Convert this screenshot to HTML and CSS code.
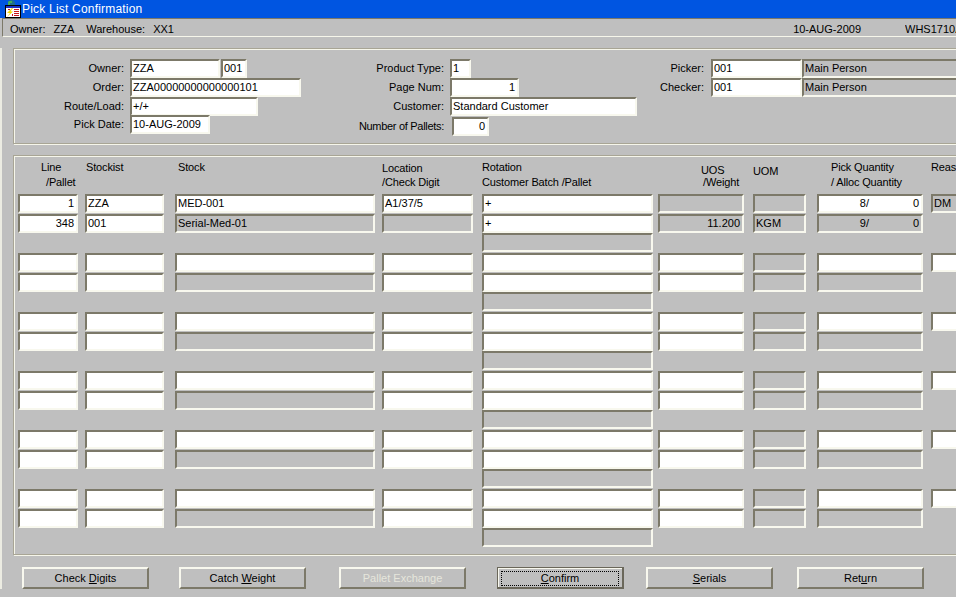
FILE: index.html
```html
<!DOCTYPE html>
<html lang="en">
<head>
    <meta charset="UTF-8">
    <meta name="viewport" content="width=device-width, initial-scale=1.0">
    <title>Pick List Confirmation</title>
    <link rel="stylesheet" href="styles.css">
</head>
<body>
    <header class="title-bar">
        <svg class="app-icon" width="16" height="18" viewBox="0 0 16 18">
            <circle cx="6.5" cy="3.5" r="3.5" fill="#1f6f8f"/>
            <path d="M4 1h3v2H5v2H3V2z" fill="#3fae5a"/>
            <rect x="0" y="5" width="16" height="13" fill="#000"/>
            <rect x="1" y="6" width="14" height="11" fill="#fff"/>
            <rect x="1" y="6" width="14" height="2" fill="#1c2fc4"/>
            <path d="M9 9h5v1H9zM9 11h5v1H9zM9 13h5v1H9zM9 15h5v1H9z" fill="#c81818"/>
            <path d="M7 8L2 13h3l-3 4 6-5.500H5.500L8 8z" fill="#f4d800"/>
            <path d="M3 9h2v1H3zM7 14h1v2H7z" fill="#c81818"/>
        </svg>
        <span>Pick List Confirmation</span>
    </header>

    <div class="status-bar">
        <span>Owner:</span>
        <span class="status-value">ZZA</span>
        <span class="status-warehouse">Warehouse:</span>
        <span class="status-value">XX1</span>
        <span class="status-date">10-AUG-2009</span>
        <span class="status-code">WHS1710A</span>
    </div>

    <main class="window">
        <section class="panel head-panel">
            <div class="head-col head-col-1">
                <div class="form-row"><label>Owner:</label><div class="field w-90">ZZA</div><div class="field w-26">001</div></div>
                <div class="form-row"><label>Order:</label><div class="field w-171">ZZA00000000000000101</div></div>
                <div class="form-row"><label>Route/Load:</label><div class="field w-128">+/+</div></div>
                <div class="form-row"><label>Pick Date:</label><div class="field w-80">10-AUG-2009</div></div>
            </div>
            <div class="head-col head-col-2">
                <div class="form-row"><label>Product Type:</label><div class="field w-21">1</div></div>
                <div class="form-row"><label>Page Num:</label><div class="field w-69 num">1</div></div>
                <div class="form-row"><label>Customer:</label><div class="field w-187">Standard Customer</div></div>
                <div class="form-row pallets-row"><label>Number of Pallets:</label><div class="field w-37 num">0</div></div>
            </div>
            <div class="head-col head-col-3">
                <div class="form-row"><label>Picker:</label><div class="field w-91">001</div><div class="field off w-170">Main Person</div></div>
                <div class="form-row"><label>Checker:</label><div class="field w-91">001</div><div class="field off w-170">Main Person</div></div>
            </div>
        </section>

        <section class="panel lines-panel">
            <div class="line-head">
                <div class="col col-line head-line"><div>Line</div><div>/Pallet</div></div>
                <div class="col col-stockist"><div class="head-text">Stockist</div></div>
                <div class="col col-stock"><div class="head-text">Stock</div></div>
                <div class="col col-location head-low"><div>Location</div><div>/Check Digit</div></div>
                <div class="col col-rotation"><div>Rotation</div><div>Customer Batch /Pallet</div></div>
                <div class="col col-uos head-uos"><div>UOS</div><div>/Weight</div></div>
                <div class="col col-uom head-uom"><div>UOM</div></div>
                <div class="col col-qty head-qty"><div>Pick Quantity</div><div>/ Alloc Quantity</div></div>
                <div class="col col-reason"><div>Reason</div></div>
            </div>

            <div class="line-group">
                <div class="col col-line"><div class="field num">1</div><div class="field num">348</div></div>
                <div class="col col-stockist"><div class="field">ZZA</div><div class="field">001</div></div>
                <div class="col col-stock"><div class="field">MED-001</div><div class="field off">Serial-Med-01</div></div>
                <div class="col col-location"><div class="field">A1/37/5</div><div class="field off"></div></div>
                <div class="col col-rotation"><div class="field">+</div><div class="field">+</div><div class="field off"></div></div>
                <div class="col col-uos"><div class="field off"></div><div class="field off num">11.200</div></div>
                <div class="col col-uom"><div class="field off"></div><div class="field off">KGM</div></div>
                <div class="col col-qty">
                    <div class="field qty"><span class="qty-pick">8/</span><span>0</span></div>
                    <div class="field off qty"><span class="qty-pick">9/</span><span>0</span></div>
                </div>
                <div class="col col-reason"><div class="field off">DM</div></div>
            </div>

            <div class="line-group">
                <div class="col col-line"><div class="field"></div><div class="field"></div></div>
                <div class="col col-stockist"><div class="field"></div><div class="field"></div></div>
                <div class="col col-stock"><div class="field"></div><div class="field off"></div></div>
                <div class="col col-location"><div class="field"></div><div class="field"></div></div>
                <div class="col col-rotation"><div class="field"></div><div class="field"></div><div class="field off"></div></div>
                <div class="col col-uos"><div class="field"></div><div class="field"></div></div>
                <div class="col col-uom"><div class="field off"></div><div class="field off"></div></div>
                <div class="col col-qty"><div class="field"></div><div class="field off"></div></div>
                <div class="col col-reason"><div class="field"></div></div>
            </div>

            <div class="line-group">
                <div class="col col-line"><div class="field"></div><div class="field"></div></div>
                <div class="col col-stockist"><div class="field"></div><div class="field"></div></div>
                <div class="col col-stock"><div class="field"></div><div class="field off"></div></div>
                <div class="col col-location"><div class="field"></div><div class="field"></div></div>
                <div class="col col-rotation"><div class="field"></div><div class="field"></div><div class="field off"></div></div>
                <div class="col col-uos"><div class="field"></div><div class="field"></div></div>
                <div class="col col-uom"><div class="field off"></div><div class="field off"></div></div>
                <div class="col col-qty"><div class="field"></div><div class="field off"></div></div>
                <div class="col col-reason"><div class="field"></div></div>
            </div>

            <div class="line-group">
                <div class="col col-line"><div class="field"></div><div class="field"></div></div>
                <div class="col col-stockist"><div class="field"></div><div class="field"></div></div>
                <div class="col col-stock"><div class="field"></div><div class="field off"></div></div>
                <div class="col col-location"><div class="field"></div><div class="field"></div></div>
                <div class="col col-rotation"><div class="field"></div><div class="field"></div><div class="field off"></div></div>
                <div class="col col-uos"><div class="field"></div><div class="field"></div></div>
                <div class="col col-uom"><div class="field off"></div><div class="field off"></div></div>
                <div class="col col-qty"><div class="field"></div><div class="field off"></div></div>
                <div class="col col-reason"><div class="field"></div></div>
            </div>

            <div class="line-group">
                <div class="col col-line"><div class="field"></div><div class="field"></div></div>
                <div class="col col-stockist"><div class="field"></div><div class="field"></div></div>
                <div class="col col-stock"><div class="field"></div><div class="field off"></div></div>
                <div class="col col-location"><div class="field"></div><div class="field"></div></div>
                <div class="col col-rotation"><div class="field"></div><div class="field"></div><div class="field off"></div></div>
                <div class="col col-uos"><div class="field"></div><div class="field"></div></div>
                <div class="col col-uom"><div class="field off"></div><div class="field off"></div></div>
                <div class="col col-qty"><div class="field"></div><div class="field off"></div></div>
                <div class="col col-reason"><div class="field"></div></div>
            </div>

            <div class="line-group">
                <div class="col col-line"><div class="field"></div><div class="field"></div></div>
                <div class="col col-stockist"><div class="field"></div><div class="field"></div></div>
                <div class="col col-stock"><div class="field"></div><div class="field off"></div></div>
                <div class="col col-location"><div class="field"></div><div class="field"></div></div>
                <div class="col col-rotation"><div class="field"></div><div class="field"></div><div class="field off"></div></div>
                <div class="col col-uos"><div class="field"></div><div class="field"></div></div>
                <div class="col col-uom"><div class="field off"></div><div class="field off"></div></div>
                <div class="col col-qty"><div class="field"></div><div class="field off"></div></div>
                <div class="col col-reason"><div class="field"></div></div>
            </div>
        </section>

        <div class="button-bar">
            <button class="btn">Check <u>D</u>igits</button>
            <button class="btn btn-catch">Catch <u>W</u>eight</button>
            <button class="btn btn-pallet" disabled>Pallet Exchange</button>
            <button class="btn btn-confirm"><span class="focus-box"><u>C</u>onfirm</span></button>
            <button class="btn btn-serials"><u>S</u>erials</button>
            <button class="btn btn-return">Ret<u>u</u>rn</button>
        </div>
    </main>
</body>
</html>
```

FILE: styles.css
```css
/* Pick list form */
body {
    margin: 0;
    width: 956px;
    height: 597px;
    overflow: hidden;
    background-color: #bfbfbf;
    color: #000;
    font-family: "Liberation Sans", Arial, sans-serif;
    font-size: 11px;
}

.title-bar {
    height: 18px;
    background-color: #0055e1;
    color: #fff;
    font-size: 12px;
    letter-spacing: 0.2px;
    display: flex;
    align-items: center;
}

.app-icon {
    margin-left: 5px;
    margin-right: 1px;
    flex-shrink: 0;
}

.status-bar {
    height: 14px;
    padding-left: 7px;
    padding-top: 3px;
    display: flex;
    align-items: center;
    border-top: 1px solid #7c7969;
    border-left: 1px solid #7c7969;
    border-bottom: 1px solid #f6f6ea;
    margin-left: 2px;
    white-space: nowrap;
}

.status-value {
    margin-left: 8px;
}

.status-warehouse {
    margin-left: 12px;
}

.status-date {
    margin-left: auto;
    margin-right: 44px;
}

.status-code {
    width: 51px;
    overflow: hidden;
}

.window {
    border-left: 2px solid #ecece2;
    padding-left: 11px;
    width: 1000px;
}

.panel {
    border: 1px solid #a8a595;
    box-shadow: inset 1px 1px 0 #f6f6ea, 1px 1px 0 #f6f6ea;
}

/* Header block */
.head-panel {
    margin-top: 11px;
    height: 96px;
    box-sizing: border-box;
    padding-top: 10px;
    display: flex;
}

.head-col {
    flex-shrink: 0;
}

.head-col-1 {
    width: 336px;
}

.head-col-2 {
    width: 270px;
}

.form-row {
    display: flex;
    height: 19px;
}

.form-row .field {
    flex-shrink: 0;
}

.form-row label {
    line-height: 18px;
    text-align: right;
    margin-right: 6px;
    white-space: nowrap;
    flex-shrink: 0;
}

.head-col-1 label {
    width: 110px;
}

.head-col-2 label {
    width: 94px;
}

.head-col-3 label {
    width: 84px;
    margin-right: 7px;
}

.head-col-1 .form-row:last-child {
    margin-top: -1px;
}

.pallets-row {
    margin-top: 1px;
}

.pallets-row label {
    letter-spacing: -0.3px;
}

.pallets-row .field {
    margin-left: 2px;
}

/* Fields */
.field {
    box-sizing: border-box;
    height: 19px;
    padding: 0 2px 0 1px;
    line-height: 15px;
    background-color: #fff;
    border: 2px solid;
    border-color: #7c7969 #f8f8ee #f8f8ee #7c7969;
    white-space: nowrap;
    overflow: hidden;
}

.field.off {
    background-color: #bfbfbf;
}

.num {
    text-align: right;
}

.w-21 { width: 21px; }
.w-26 { width: 26px; margin-left: 1px; }
.w-37 { width: 37px; }
.w-69 { width: 69px; }
.w-80 { width: 80px; }
.w-90 { width: 90px; }
.w-91 { width: 91px; }
.w-128 { width: 128px; }
.w-170 { width: 170px; }
.w-171 { width: 171px; }
.w-187 { width: 187px; }

.qty {
    display: flex;
    justify-content: space-between;
}

.qty-pick {
    width: 49px;
    text-align: right;
}

/* Lines table */
.lines-panel {
    margin-top: 11px;
    height: 400px;
    box-sizing: border-box;
}

.line-head {
    display: flex;
    height: 38px;
    padding-top: 4px;
    box-sizing: border-box;
    line-height: 15px;
    letter-spacing: -0.15px;
    white-space: nowrap;
}

.line-group {
    display: flex;
    height: 59px;
}

.col {
    box-sizing: border-box;
    display: flex;
    flex-direction: column;
    gap: 0.5px;
    flex-shrink: 0;
}

.col-line { width: 60px; margin-left: 4px; }
.col-stockist { width: 79px; margin-left: 7px; }
.col-stock { width: 200px; margin-left: 11px; }
.col-location { width: 91px; margin-left: 7px; }
.col-rotation { width: 171px; margin-left: 9px; }
.col-uos { width: 86px; margin-left: 5px; }
.col-uom { width: 53px; margin-left: 9px; }
.col-qty { width: 106px; margin-left: 11px; }
.col-reason { width: 60px; margin-left: 8px; }

.line-head .col {
    gap: 0;
}

.head-line div:first-child {
    padding-left: 23px;
}

.head-line div:last-child {
    padding-left: 28px;
}

.head-text {
    padding-left: 1px;
}

.col-stock .head-text {
    padding-left: 3px;
}

.head-low {
    padding-top: 1px;
}

.head-low div:last-child {
    margin-top: -1px;
}

.head-uos {
    padding-top: 3px;
}

.head-uos div:first-child {
    padding-left: 43px;
}

.head-uos div:last-child {
    padding-left: 45px;
    margin-top: -3px;
}

.head-uom {
    padding-top: 4px;
}

.head-qty {
    padding-left: 14px;
}

/* Buttons */
.button-bar {
    display: flex;
    margin-top: 12px;
    margin-left: 9px;
}

.btn {
    box-sizing: border-box;
    width: 127px;
    height: 22px;
    padding: 0;
    background-color: #bfbfbf;
    border: 2px solid;
    border-color: #f8f8ee #7c7969 #7c7969 #f8f8ee;
    font-family: inherit;
    font-size: 11px;
    color: #000;
}

.btn-catch { margin-left: 30px; }
.btn-pallet { margin-left: 33px; color: #e6e6dc; }
.btn-confirm { margin-left: 31px; padding: 1px; border-color: #6a675a; border-width: 1px 2px 2px 1px; box-shadow: inset 1px 1px 0 #f8f8ee; }
.btn-serials { margin-left: 22px; }
.btn-return { margin-left: 24px; }

.focus-box {
    display: block;
    margin: 2px;
    line-height: 13px;
    border: 1px dotted #000;
}
```
